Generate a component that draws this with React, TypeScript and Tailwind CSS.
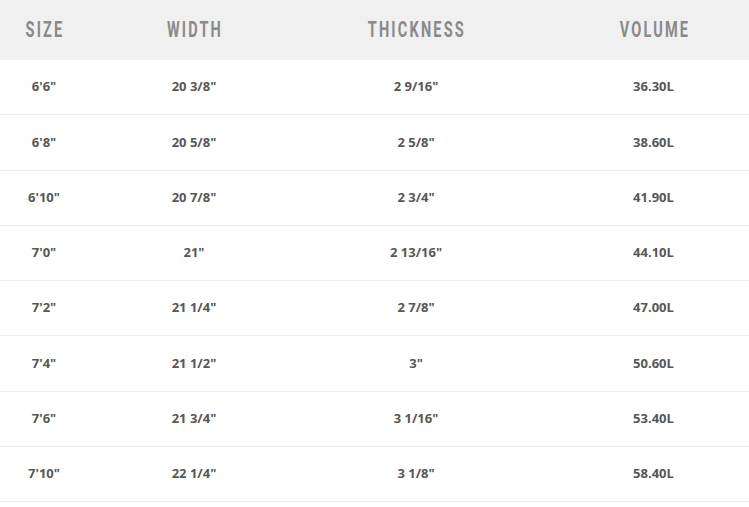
const rows = [
  ["6'6\"", '20 3/8"', '2 9/16"', "36.30L"],
  ["6'8\"", '20 5/8"', '2 5/8"', "38.60L"],
  ["6'10\"", '20 7/8"', '2 3/4"', "41.90L"],
  ["7'0\"", '21"', '2 13/16"', "44.10L"],
  ["7'2\"", '21 1/4"', '2 7/8"', "47.00L"],
  ["7'4\"", '21 1/2"', '3"', "50.60L"],
  ["7'6\"", '21 3/4"', '3 1/16"', "53.40L"],
  ["7'10\"", '22 1/4"', '3 1/8"', "58.40L"],
];

const headers = ["SIZE", "WIDTH", "THICKNESS", "VOLUME"];

const cols = "grid grid-cols-[88px_212px_232px_217px]";

const App = () => {
  return (
    <div className="w-[749px] h-[507px] bg-white overflow-hidden">
      {/* Header */}
      <div className={`${cols} h-[60px] bg-[#f0f0f0] items-center`}>
        {headers.map((h, i) => (
          <div key={h} className={`flex justify-center ${i === 3 ? "pl-[26px]" : ""}`}>
            <span className="inline-block scale-x-[0.66] text-[22px] font-bold tracking-[3.3px] text-[#8a8a8a] font-['Roboto',sans-serif] leading-none pl-[3px] -mt-[1px]">
              {h}
            </span>
          </div>
        ))}
      </div>

      {/* Rows */}
      {rows.map((r, idx) => (
        <div
          key={idx}
          className={`${cols} h-[55.25px] items-center border-b border-[#ececec]`}
        >
          {r.map((c, i) => (
            <div
              key={i}
              className={`text-center text-[13px] font-bold text-[#575757] font-['Open_Sans',sans-serif] ${i === 3 ? "pl-[26px]" : ""}`}
            >
              {c}
            </div>
          ))}
        </div>
      ))}
    </div>
  );
};

export default App;
